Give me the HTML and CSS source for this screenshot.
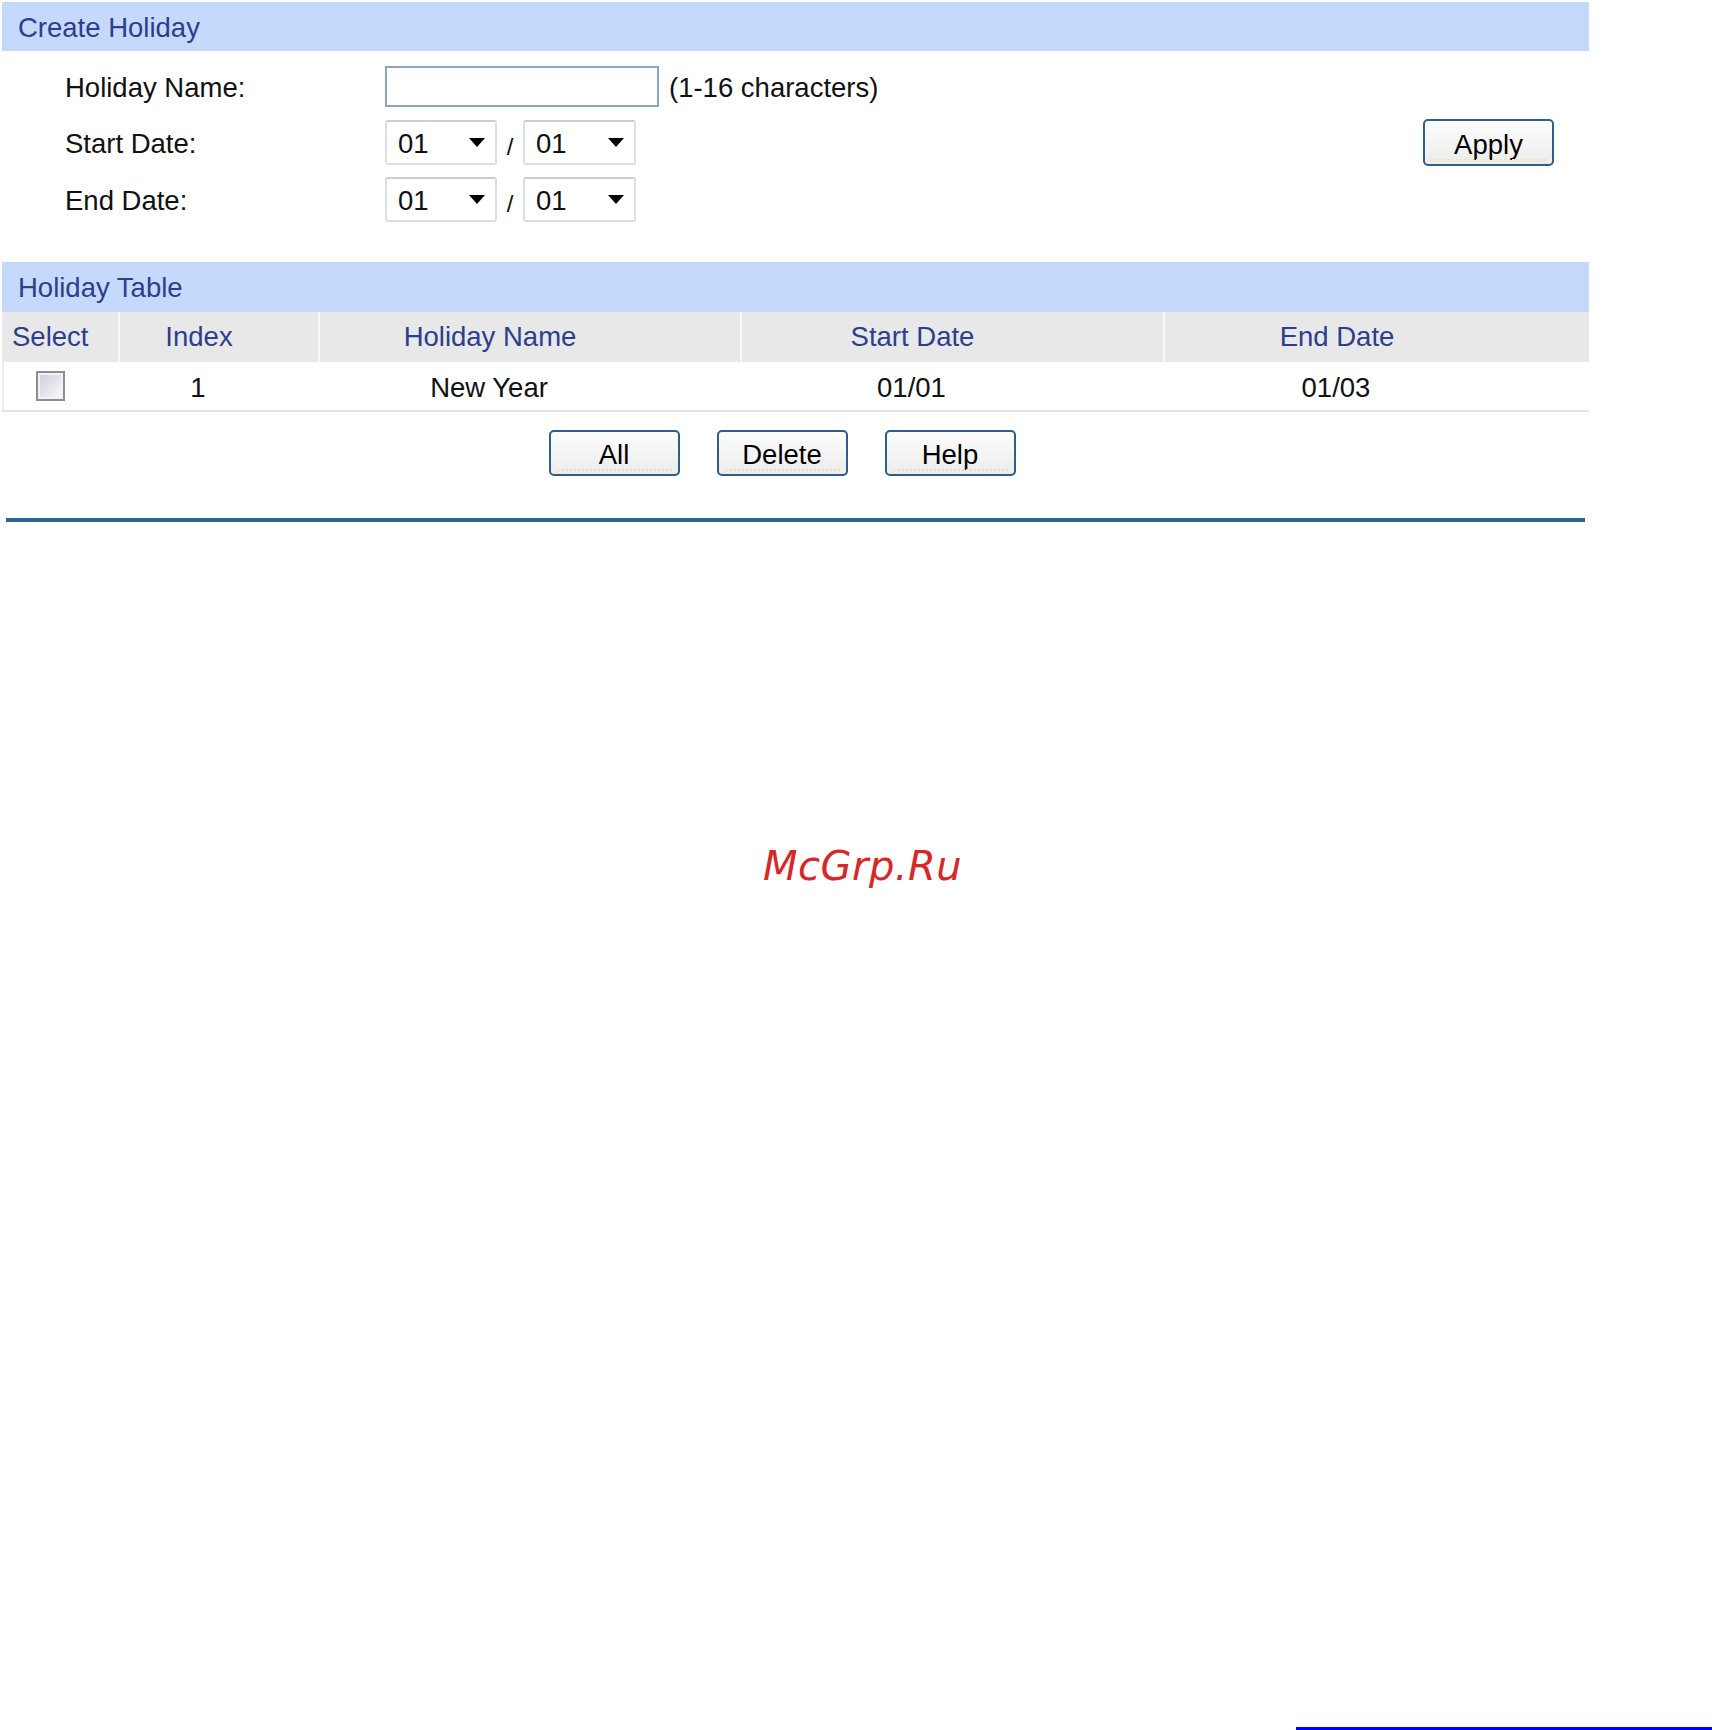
FILE: index.html
```html
<!DOCTYPE html>
<html lang="en">
<head>
<meta charset="utf-8">
<title>Holiday</title>
<link rel="stylesheet" href="styles.css">
</head>
<body>
<div class="screen">
  <section class="panel">
    <div class="bar bar-create">Create Holiday</div>
    <div class="form">
      <div class="row row-name">
        <span class="lbl">Holiday Name:</span>
        <input class="txt" type="text">
        <span class="hint">(1-16 characters)</span>
      </div>
      <div class="row row-start">
        <span class="lbl">Start Date:</span>
        <div class="sel"><span>01</span><i class="caret"></i></div>
        <span class="slash">/</span>
        <div class="sel sel-b"><span>01</span><i class="caret"></i></div>
        <button class="btn btn-apply" type="button">Apply</button>
      </div>
      <div class="row row-end">
        <span class="lbl">End Date:</span>
        <div class="sel"><span>01</span><i class="caret"></i></div>
        <span class="slash">/</span>
        <div class="sel sel-b"><span>01</span><i class="caret"></i></div>
      </div>
    </div>

    <div class="bar bar-table">Holiday Table</div>
    <div class="tbl">
      <div class="tr th">
        <div class="c c-sel">Select</div>
        <div class="c c-idx">Index</div>
        <div class="c c-wide">Holiday Name</div>
        <div class="c c-wide">Start Date</div>
        <div class="c c-wide">End Date</div>
      </div>
      <div class="tr td">
        <div class="c c-sel c-chk"><span class="chk"></span></div>
        <div class="c c-idx">1</div>
        <div class="c c-wide">New Year</div>
        <div class="c c-wide">01/01</div>
        <div class="c c-wide">01/03</div>
      </div>
    </div>

    <div class="actions">
      <button class="btn btn-act" type="button">All</button>
      <button class="btn btn-act" type="button">Delete</button>
      <button class="btn btn-act" type="button">Help</button>
    </div>
    <div class="rule"></div>
  </section>

  <div class="watermark">McGrp.Ru</div>
  <div class="edge-line"></div>
</div>
</body>
</html>
```

FILE: styles.css
```css
html, body {
  margin: 0;
  padding: 0;
  background: #ffffff;
}

body {
  font-family: "Liberation Sans", Arial, sans-serif;
  font-size: 27.5px;
  color: #111111;
}

.screen {
  position: relative;
  width: 1712px;
  height: 1730px;
  overflow: hidden;
}

.panel {
  margin-left: 2px;
  padding-top: 2px;
  width: 1587px;
}

/* section title bars */
.bar {
  background: #c5d9fc;
  color: #2c3e8c;
  font-size: 27.5px;
  padding-left: 16px;
  padding-top: 2px;
  box-sizing: border-box;
  display: flex;
  align-items: center;
}

.bar-create {
  height: 49px;
}

.bar-table {
  height: 50px;
}

/* create form */
.form {
  padding: 15px 0 39px 63px;
}

.row {
  display: flex;
  align-items: center;
}

.row-name {
  height: 41px;
}

.row-start {
  height: 47px;
  margin-top: 12px;
}

.row-end {
  height: 47px;
  margin-top: 10px;
}

.lbl {
  width: 320px;
  flex: none;
  padding-top: 3px;
  color: #111111;
}

.txt {
  width: 274px;
  height: 41px;
  box-sizing: border-box;
  border: 2px solid #8ba5c1;
  margin: 0;
  padding: 0 6px;
  background: #ffffff;
  font: 27.5px "Liberation Sans", Arial, sans-serif;
  flex: none;
}

.hint {
  margin-left: 10px;
  padding-top: 3px;
  color: #111111;
}

.sel {
  width: 112px;
  height: 45px;
  box-sizing: border-box;
  border: 2px solid #dedede;
  border-top-color: #cdcdcd;
  border-radius: 3px;
  display: flex;
  align-items: center;
  justify-content: space-between;
  padding: 2px 10px 0 11px;
  color: #111111;
  background: #ffffff;
  flex: none;
}

.sel-b {
  width: 113px;
}

.caret {
  width: 0;
  height: 0;
  margin-top: -2px;
  border-left: 8px solid transparent;
  border-right: 8px solid transparent;
  border-top: 9px solid #000000;
}

.slash {
  width: 26px;
  text-align: center;
  font-size: 24px;
  padding-top: 8px;
  color: #111111;
  flex: none;
}

/* buttons */
.btn {
  position: relative;
  width: 131px;
  box-sizing: border-box;
  border: 2px solid #2f5d8c;
  border-radius: 5px;
  background: linear-gradient(#fdfdfd, #ececec);
  font: 27.5px "Liberation Sans", Arial, sans-serif;
  color: #000000;
  padding: 4px 0 0 0;
  margin: 0;
  flex: none;
}

.btn::after {
  content: "";
  position: absolute;
  left: 6px;
  right: 6px;
  bottom: 3px;
  border-bottom: 2px dotted #f1e2ad;
}

.btn-apply {
  height: 47px;
  margin-left: auto;
  margin-right: 35px;
}

.btn-act {
  height: 46px;
}

/* table */
.tr {
  display: grid;
  grid-template-columns: 116px 200px 422px 423px 426px;
  height: 50px;
  box-sizing: border-box;
}

.th {
  background: #e8e8e8;
  color: #2c3e8c;
}

.th .c + .c {
  border-left: 2px solid #f8f8f8;
}

.td {
  background: #ffffff;
  border-bottom: 2px solid #e3e3e3;
  box-shadow: inset 2px 0 0 #ececec;
  color: #111111;
}

.td .c {
  padding-top: 4px;
}

.c {
  display: flex;
  align-items: center;
  justify-content: center;
  box-sizing: border-box;
  white-space: nowrap;
}

.c-sel {
  justify-content: flex-start;
  padding-left: 10px;
}

.td .c-chk {
  padding-left: 34px;
  padding-top: 0;
}

.c-idx {
  padding-right: 40px;
}

.c-wide {
  padding-right: 80px;
}

.chk {
  display: block;
  width: 29px;
  height: 30px;
  box-sizing: border-box;
  border: 2px solid #8e8e8e;
  background: linear-gradient(135deg, #c9ced8, #fbfbfb);
  box-shadow: inset 0 0 0 2px #f2f2f2;
}

/* action row */
.actions {
  display: flex;
  justify-content: center;
  gap: 37px;
  margin-top: 18px;
  padding-right: 27px;
}

.rule {
  margin-top: 42px;
  margin-left: 4px;
  width: 1579px;
  height: 4px;
  background: #2c6496;
}

/* overlays */
.watermark {
  position: absolute;
  left: 763px;
  top: 846px;
  font-family: "DejaVu Sans", sans-serif;
  font-style: italic;
  font-size: 40px;
  line-height: 40px;
  letter-spacing: 0.5px;
  color: #d62828;
}

.edge-line {
  position: absolute;
  left: 1296px;
  top: 1727px;
  width: 416px;
  height: 3px;
  background: #0000ff;
}
```
